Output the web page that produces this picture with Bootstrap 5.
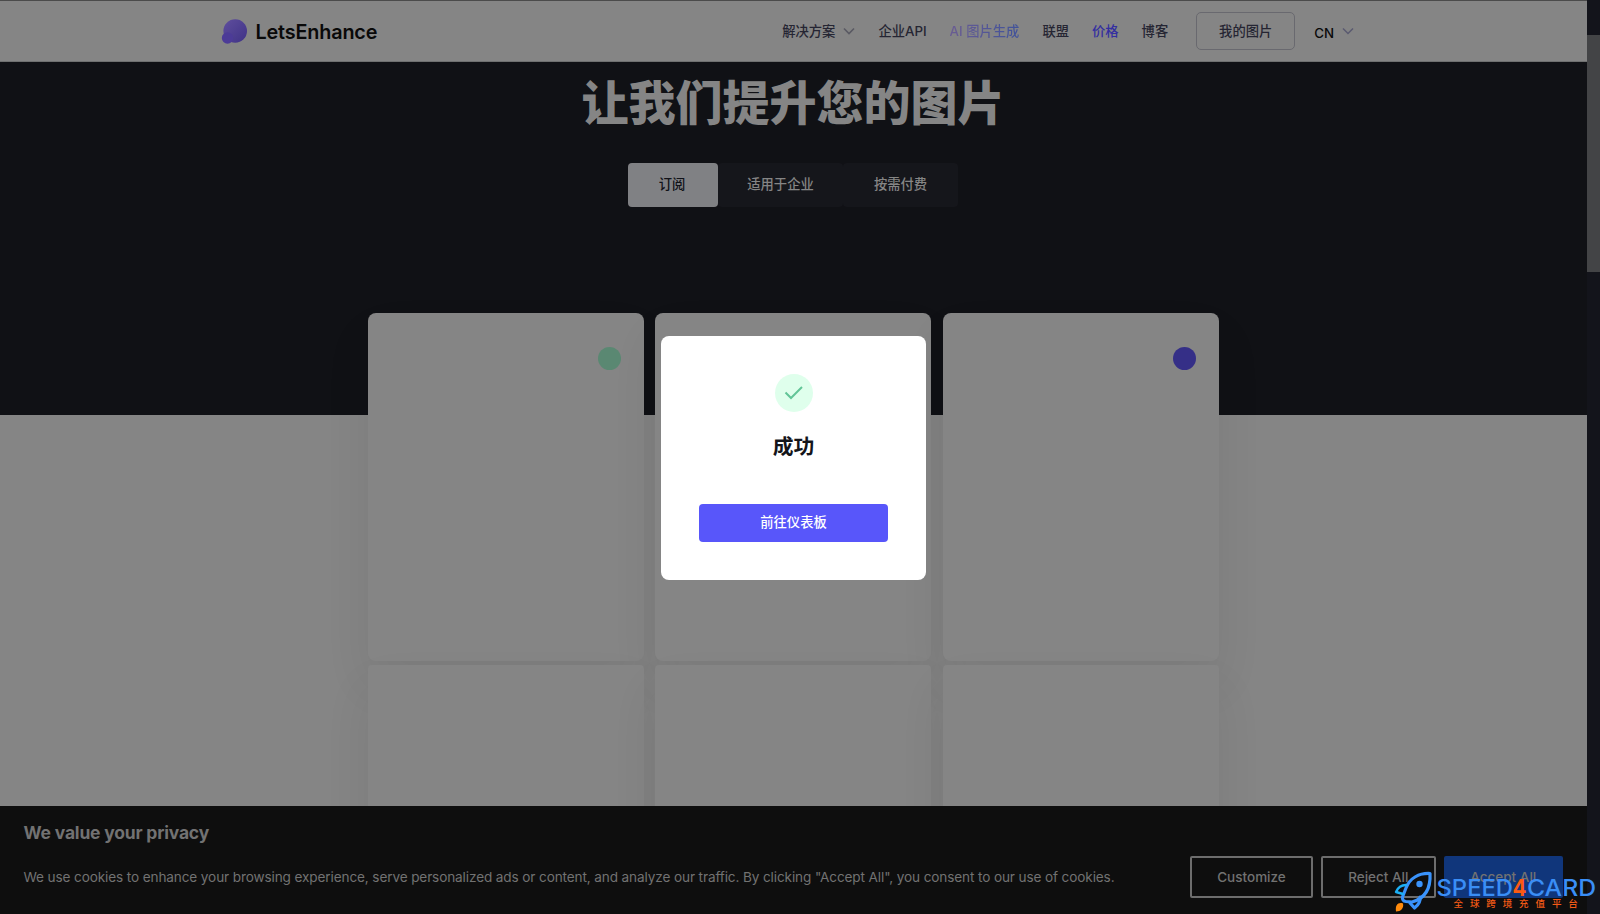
<!DOCTYPE html>
<html lang="zh-CN">
<head>
<meta charset="utf-8">
<meta name="viewport" content="width=device-width, initial-scale=1">
<title>LetsEnhance</title>
<link href="https://cdn.jsdelivr.net/npm/bootstrap@5.3.0/dist/css/bootstrap.min.css" rel="stylesheet">
<style>
body{font-family:Inter,"Noto Sans CJK SC",sans-serif;font-size:13.3px;height:914px;overflow:hidden;background:#858585;color:#252533}
.page-col{width:1587px;height:914px;overflow:hidden}
.track{width:13px;background:#13141b}
.track-thumb{margin-top:35px;height:237px;background:#434446}
.topbar{height:62px;border-top:1px solid #4b4b4b;border-bottom:1px solid #6f7070;background:#858585;padding:0 233px 0 221px;font-weight:500}
.brand-name{font-size:19.8px;font-weight:600;letter-spacing:-.15px;color:#090909;margin-left:7.5px;padding-top:3px}
.menu{gap:23px;line-height:20px}
.ai-link{background:linear-gradient(90deg,#6a5c92,#40529a);-webkit-background-clip:text;background-clip:text;color:transparent}
.price{color:#342fa0}
.my-btn{width:99px;height:38px;border:1px solid #69696f;border-radius:5px;margin-left:5px;margin-right:-4px}
.hero{height:353px;background:#101115}
.hero h1{font-size:47px;font-weight:900;line-height:60px;color:#858585;padding:11px 1px 0 0;margin:0 0 30px 0}
.tabs{width:331px;height:43.5px;padding-right:1px;font-weight:500;color:#858585}
.tabs div{background:#15161b;border-radius:4px}
.tabs div.on{background:#808184;color:#111218;padding-right:2px}
.plans{width:852px;display:grid;grid-template-columns:repeat(3,276.3px);column-gap:11.3px;row-gap:4px;margin:-102px auto 0;position:relative}
.plan{height:347.5px;background:#858585;border-radius:8px;padding:34px 23px}
.plan-low{height:250px;border-radius:4px}
.shade{box-shadow:0 24px 48px rgba(0,0,0,.07)}
.dot{width:23px;height:23px;border-radius:50%;margin-left:auto}
.dialog-box{left:661px;top:336px;width:265px;height:244px;border-radius:8px;background:#fff;padding:38px 38px 36px}
.ok-circle{width:38px;height:38px;border-radius:50%;background:#dfffec}
.dialog-box h2{font-size:20.8px;font-weight:700;line-height:30px;color:#14151a;margin:20px 0 42px}
.go{height:38px;background:#5856fa;color:#fff;border-radius:4px;font-weight:500}
.cookie{left:0;top:806px;width:1587px;height:108px;background:#0e0e0e;color:#727272;padding:0 24px 0 23.5px}
.cookie h3{font-size:17.5px;font-weight:700;line-height:24px;padding-top:15px;margin:0;letter-spacing:-.2px}
.cookie p{font-size:13.6px;letter-spacing:-.125px;margin:0;white-space:nowrap}
.ck{height:42px;border:2px solid #6d6d6d;border-radius:2px;font-size:13.5px;font-weight:500}
.mark-layer{left:1390px;top:866px}
</style>
</head>
<body>
<div class="d-flex">
<div class="page-col">
<header class="topbar d-flex align-items-center justify-content-between">
 <div class="d-flex align-items-center">
  <svg width="27" height="27" viewBox="0 0 27 27"><defs><linearGradient id="a" x2="1" y2="1"><stop stop-color="#5f4e9d"/><stop offset="1" stop-color="#3f3286"/></linearGradient></defs><circle cx="14.2" cy="13" r="11.8" fill="url(#a)"/><circle cx="6.5" cy="20" r="5.7" fill="#4c3b97"/></svg>
  <span class="brand-name">LetsEnhance</span>
 </div>
 <nav class="menu d-flex align-items-center">
  <span class="d-flex align-items-center">解决方案<svg class="ms-2" width="12" height="8" viewBox="0 0 12 8"><path d="M1 1.5l5 5 5-5" fill="none" stroke="#5a5a63" stroke-width="1.6"/></svg></span>
  <span>企业API</span><span class="ai-link">AI 图片生成</span><span>联盟</span><span class="price">价格</span><span>博客</span>
  <span class="my-btn d-flex align-items-center justify-content-center">我的图片</span>
  <span class="d-flex align-items-center"><span class="pt-1" style="color:#090909">CN</span><svg class="ms-2" width="12" height="8" viewBox="0 0 12 8"><path d="M1 1.5l5 5 5-5" fill="none" stroke="#5a5a70" stroke-width="1.5"/></svg></span>
 </nav>
</header>
<section class="hero">
 <h1 class="text-center">让我们提升您的图片</h1>
 <div class="tabs d-flex mx-auto text-center">
  <div class="on d-flex align-items-center justify-content-center" style="width:90px">订阅</div>
  <div class="d-flex align-items-center justify-content-center" style="width:125px">适用于企业</div>
  <div class="d-flex align-items-center justify-content-center" style="width:115px">按需付费</div>
 </div>
</section>
<section class="plans">
 <div class="plan shade"><div class="dot" style="background:#5a8872"></div></div>
 <div class="plan shade"></div>
 <div class="plan shade"><div class="dot" style="background:#352f87"></div></div>
 <div class="plan plan-low shade"></div><div class="plan plan-low shade"></div><div class="plan plan-low shade"></div>
</section>
</div>
<div class="track"><div class="track-thumb"></div></div>
</div>

<section class="cookie position-absolute">
 <h3>We value your privacy</h3>
 <div class="d-flex align-items-center justify-content-between" style="margin-top:11px">
  <p>We use cookies to enhance your browsing experience, serve personalized ads or content, and analyze our traffic. By clicking "Accept All", you consent to our use of cookies.</p>
  <div class="d-flex gap-2">
   <div class="ck d-flex align-items-center justify-content-center" style="width:123px">Customize</div>
   <div class="ck d-flex align-items-center justify-content-center" style="width:114.5px">Reject All</div>
   <div class="ck d-flex align-items-center justify-content-center" style="width:119.5px;background:#10367b;border-color:#10367b">Accept All</div>
  </div>
 </div>
</section>

<div class="dialog-box position-absolute text-center">
 <div class="ok-circle d-flex align-items-center justify-content-center mx-auto"><svg width="20" height="16" viewBox="0 0 20 16"><path d="M1.5 7.5l5.5 5.5L18 2" fill="none" stroke="#62c597" stroke-width="2"/></svg></div>
 <h2>成功</h2>
 <div class="go d-flex align-items-center justify-content-center">前往仪表板</div>
</div>

<svg class="mark-layer position-absolute" width="210" height="48" viewBox="0 0 210 48">
 <g fill="none" stroke="#3a93fb" stroke-width="3.200" stroke-linejoin="round" stroke-linecap="round">
  <path d="M40 7.500C29 7 20 12 16 22L12.500 31Q12 35 16 35.500L22 36C33 33 41 25 40 7.500Z"/>
  <path d="M16 19Q9 19 6 26L13 28" stroke="#1cb0f6" stroke-width="2.400"/>
  <path d="M20 37L24.500 42Q31 37 30 31"/>
 </g>
 <circle cx="29.500" cy="18" r="3.200" fill="#3a93fb"/>
 <path d="M13 37.500C8 36 5 39 6 45.500C11 45.500 14 42 13 37.500Z" fill="#ff8a0c"/>
 <g font-family="Inter, sans-serif" font-size="23" font-weight="500" fill="#3a8ef6">
  <text x="46.500" y="30" textLength="76.500" lengthAdjust="spacingAndGlyphs">SPEED</text>
  <text x="122.500" y="30" fill="#fb5a12" font-weight="700" textLength="14" lengthAdjust="spacingAndGlyphs">4</text>
  <text x="137" y="30" textLength="69" lengthAdjust="spacingAndGlyphs">CARD</text>
 </g>
 <text x="63.500" y="41" font-family="Noto Sans CJK SC, sans-serif" font-size="9.500" font-weight="500" letter-spacing="6.900" fill="#f55b16">全球跨境充值平台</text>
</svg>
<script src="https://cdn.jsdelivr.net/npm/bootstrap@5.3.0/dist/js/bootstrap.bundle.min.js"></script>
</body>
</html>
